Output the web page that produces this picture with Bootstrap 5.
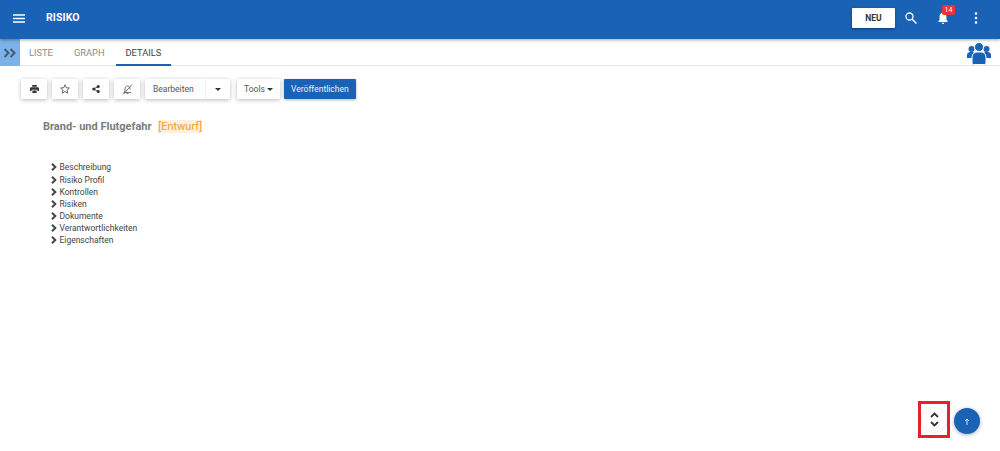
<!DOCTYPE html>
<html lang="en">

<head>
  <meta charset="UTF-8" />
  <title>Risiko</title>
  <link href="https://cdn.jsdelivr.net/npm/bootstrap@5.3.0/dist/css/bootstrap.min.css" rel="stylesheet" />
  <style>
    html, body { height: 451px; overflow: hidden; }
    body { font-family: Roboto, "Liberation Sans", sans-serif; background: #fff; color: #444; position: relative; }
    #top-bar { height: 39px; background: #1a62b5; color: #fff; box-shadow: 0 1px 3px rgba(0, 0, 0, .35); padding: 0 0 3px 13px; position: relative; z-index: 2; }
    #app-title { font-size: 10.5px; font-weight: 700; margin-left: 21px; letter-spacing: .1px; }
    #new-btn { width: 43px; height: 20px; background: #fff; color: #333; font-size: 8.5px; font-weight: 700; box-shadow: 0 1px 3px rgba(0, 0, 0, .4); border-radius: 1px; }
    #search-icon { margin-left: 10px; }
    #bell { position: relative; width: 14px; height: 14px; margin-left: 19px; }
    #bell-count { position: absolute; left: 6px; top: -6px; width: 13px; height: 10px; background: #ee3333; color: #fff; border-radius: 2px; font-size: 7px; line-height: 10px; text-align: center; }
    #more-icon { margin: 0 22px 0 24px; }
    #tab-row { height: 27px; border-bottom: 1px solid #e4e4e4; }
    #tab-toggle { width: 20px; height: 27px; background: #7db1ea; margin-right: -1px; }
    .tab-link { font-size: 9.3px; color: #8a8a8a; padding: 0 10px; line-height: 27px; height: 27px; margin-right: 1px; }
    .tab-link.is-active { color: #444; border-bottom: 2px solid #1a62b5; }
    #group-icon { margin: 3px 9px 0 auto; }
    #tool-row { padding: 13px 0 0 21px; gap: 5px; }
    .tool-box { height: 20px; background: #fff; box-shadow: 0 1px 4px rgba(0, 0, 0, .28); border-radius: 1px; font-size: 8.5px; color: #555; }
    .tool-icon { width: 26px; }
    #edit-label { width: 60px; padding-left: 8px; }
    #edit-caret { width: 25px; height: 20px; border-left: 1px solid #eee; }
    #tools-menu { width: 43px; margin-left: 2px; gap: 2px; }
    #publish-btn { height: 20px; background: #1a62b5; color: #e8f0fa; font-size: 8.5px; padding: 0 7px; border-radius: 1px; box-shadow: 0 1px 3px rgba(0, 0, 0, .3); margin-left: -1px; }
    #page-title { margin: 21px 0 0 43px; font-size: 11px; font-weight: 700; color: #7b7b7b; line-height: 14px; }
    #page-status { font-weight: 400; color: #f79a1f; background: #fff0df; margin-left: 4px; }
    #section-list { margin: 27.4px 0 0 51px; padding: 0; list-style: none; font-size: 8.5px; color: #444; }
    #section-list li { height: 12.15px; line-height: 12px; display: flex; align-items: center; gap: 2.5px; }
    #expand-btn { position: absolute; left: 918px; top: 401px; width: 32px; height: 37px; border: 3px solid #e8202a; }
    #expand-inner { width: 24px; height: 24px; border-radius: 50%; box-shadow: 0 0 3px rgba(0, 0, 0, .14); }
    #up-btn { position: absolute; left: 954px; top: 408px; width: 26px; height: 26px; border-radius: 50%; background: #1a62b5; box-shadow: 0 1px 4px rgba(0, 0, 0, .3); }
  </style>
</head>

<body>
  <div id="top-bar" class="d-flex align-items-center">
    <svg width="12" height="9" viewBox="0 0 12 9"><path d="M0 1h12M0 4.500h12M0 8h12" stroke="#fff" stroke-width="1.300" /></svg>
    <span id="app-title">RISIKO</span>
    <div class="ms-auto d-flex align-items-center">
      <div id="new-btn" class="d-flex align-items-center justify-content-center">NEU</div>
      <svg id="search-icon" width="12" height="12" viewBox="0 0 12 12"><circle cx="4.500" cy="4.500" r="3.500" fill="none" stroke="#fff" stroke-width="1.300" /><path d="M7.200 7.200l4.300 4.300" stroke="#fff" stroke-width="1.500" /></svg>
      <div id="bell" class="d-flex justify-content-center">
        <svg width="12" height="14" viewBox="0 0 14 16"><path d="M7 2c-2.600 0-4 2-4 4.500V10l-1.500 2v.7h11V12L11 10V6.500C11 4 9.600 2 7 2z" fill="#fff" /><path d="M5.500 13.500h3a1.500 1.500 0 0 1-3 0z" fill="#fff" /></svg>
        <span id="bell-count">14</span>
      </div>
      <svg id="more-icon" width="4" height="12" viewBox="0 0 4 12"><circle cx="2" cy="1.500" r="1.300" fill="#fff" /><circle cx="2" cy="6" r="1.300" fill="#fff" /><circle cx="2" cy="10.500" r="1.300" fill="#fff" /></svg>
    </div>
  </div>

  <div id="tab-row" class="d-flex">
    <div id="tab-toggle" class="d-flex align-items-center justify-content-center">
      <svg width="14" height="10" viewBox="0 0 14 10"><path d="M1.500 1l4 4-4 4M7.500 1l4 4-4 4" fill="none" stroke="#44586f" stroke-width="2" /></svg>
    </div>
    <div class="tab-link">LISTE</div>
    <div class="tab-link">GRAPH</div>
    <div class="tab-link is-active">DETAILS</div>
    <svg id="group-icon" width="24" height="23" viewBox="0 0 24 23">
      <g fill="#1a62b5">
        <circle cx="4.500" cy="7" r="3" />
        <circle cx="19.500" cy="7" r="3" />
        <path d="M0 16v-3c0-2 1.500-3 3.500-3h3v6z" />
        <path d="M24 16v-3c0-2-1.500-3-3.500-3h-3v6z" />
        <circle cx="12" cy="5" r="4.500" stroke="#fff" stroke-width="1" />
        <path d="M5 21v-6c0-3 2.500-5 5-5h4c2.500 0 5 2 5 5v6c0 1-1 1.500-2 1.500H7c-1 0-2-.5-2-1.500z" stroke="#fff" stroke-width="1" />
      </g>
    </svg>
  </div>

  <div id="tool-row" class="d-flex align-items-center">
    <div class="tool-box tool-icon d-flex align-items-center justify-content-center">
      <svg width="9" height="8" viewBox="0 0 9 8"><path d="M2.200 0h4.600v1.800H2.200zM1 2.300h7a1 1 0 0 1 1 1V6H7.400V4.800H1.600V6H0V3.300a1 1 0 0 1 1-1zM2.400 5.500h4.200V8H2.400z" fill="#333" /></svg>
    </div>
    <div class="tool-box tool-icon d-flex align-items-center justify-content-center">
      <svg width="10" height="10" viewBox="0 0 10 10"><path d="M5 .8l1.250 2.900 3.150.3-2.400 2.050.75 3.050L5 7.500 2.250 9.100 3 6.050.6 4l3.150-.3z" fill="none" stroke="#444" stroke-width=".8" /></svg>
    </div>
    <div class="tool-box tool-icon d-flex align-items-center justify-content-center">
      <svg width="8" height="8" viewBox="0 0 9 9"><path d="M7 1.500L2 4.500l5 3" fill="none" stroke="#333" /><circle cx="7" cy="1.800" r="1.700" fill="#333" /><circle cx="2" cy="4.500" r="1.700" fill="#333" /><circle cx="7" cy="7.200" r="1.700" fill="#333" /></svg>
    </div>
    <div class="tool-box tool-icon d-flex align-items-center justify-content-center">
      <svg width="11" height="11" viewBox="0 0 11 11"><path d="M5.500 2C3.800 2 3 3.300 3 5v2L1.800 8.500h7.400M8 5.500V5C8 3.300 7.200 2 5.500 2M1 10.500L10 .5M4.500 9.500h2" fill="none" stroke="#555" stroke-width=".8" /></svg>
    </div>
    <div class="tool-box d-flex align-items-center">
      <span id="edit-label">Bearbeiten</span>
      <span id="edit-caret" class="d-flex align-items-center justify-content-center"><svg width="6" height="3" viewBox="0 0 6 3"><path d="M0 0h6L3 3z" fill="#333" /></svg></span>
    </div>
    <div id="tools-menu" class="tool-box d-flex align-items-center justify-content-center">Tools <svg width="6" height="3" viewBox="0 0 6 3"><path d="M0 0h6L3 3z" fill="#333" /></svg></div>
    <div id="publish-btn" class="d-flex align-items-center">Veröffentlichen</div>
  </div>

  <div id="page-title">Brand- und Flutgefahr <span id="page-status">[Entwurf]</span></div>

  <ul id="section-list">
    <li><svg width="6" height="8" viewBox="0 0 6 8"><path d="M1 .8L4.300 4 1 7.200" fill="none" stroke="#444" stroke-width="2" /></svg>Beschreibung</li>
    <li><svg width="6" height="8" viewBox="0 0 6 8"><path d="M1 .8L4.300 4 1 7.200" fill="none" stroke="#444" stroke-width="2" /></svg>Risiko Profil</li>
    <li><svg width="6" height="8" viewBox="0 0 6 8"><path d="M1 .8L4.300 4 1 7.200" fill="none" stroke="#444" stroke-width="2" /></svg>Kontrollen</li>
    <li><svg width="6" height="8" viewBox="0 0 6 8"><path d="M1 .8L4.300 4 1 7.200" fill="none" stroke="#444" stroke-width="2" /></svg>Risiken</li>
    <li><svg width="6" height="8" viewBox="0 0 6 8"><path d="M1 .8L4.300 4 1 7.200" fill="none" stroke="#444" stroke-width="2" /></svg>Dokumente</li>
    <li><svg width="6" height="8" viewBox="0 0 6 8"><path d="M1 .8L4.300 4 1 7.200" fill="none" stroke="#444" stroke-width="2" /></svg>Verantwortlichkeiten</li>
    <li><svg width="6" height="8" viewBox="0 0 6 8"><path d="M1 .8L4.300 4 1 7.200" fill="none" stroke="#444" stroke-width="2" /></svg>Eigenschaften</li>
  </ul>

  <div id="expand-btn" class="d-flex align-items-center justify-content-center">
    <div id="expand-inner" class="d-flex align-items-center justify-content-center">
      <svg width="9" height="15" viewBox="0 0 9 15"><path d="M1 5l3.500-3.500L8 5M1 10l3.500 3.500L8 10" fill="none" stroke="#333" stroke-width="1.800" /></svg>
    </div>
  </div>
  <div id="up-btn" class="d-flex align-items-center justify-content-center">
    <svg width="6" height="7" viewBox="0 0 6 7"><path d="M3 7V1M1 3l2-2 2 2" fill="none" stroke="#dce8f6" stroke-width="1" /></svg>
  </div>
  <script src="https://cdn.jsdelivr.net/npm/bootstrap@5.3.0/dist/js/bootstrap.bundle.min.js"></script>
</body>

</html>
